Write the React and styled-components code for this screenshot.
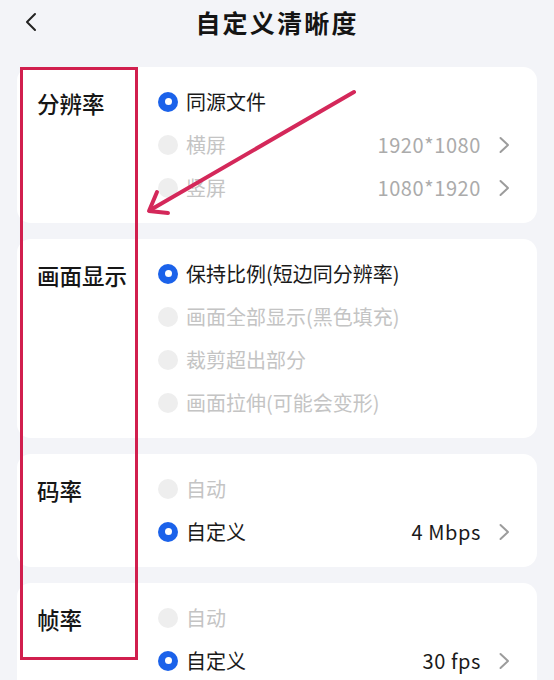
import React from "react";
import styled, { createGlobalStyle } from "styled-components";

const GlobalStyle = createGlobalStyle`
  html, body { margin: 0; padding: 0; background: #f3f4f8; }
  body { font-family: "Noto Sans CJK SC", "Noto Sans", sans-serif; -webkit-font-smoothing: antialiased; }
`;

const Page = styled.div`
  position: relative;
  width: 554px;
  min-height: 680px;
  background: #f3f4f8;
  overflow: hidden;
`;

const Header = styled.div`
  display: grid;
  grid-template-columns: 60px 1fr 60px;
  align-items: center;
  height: 44px;
`;

const BackButton = styled.button`
  display: flex;
  align-items: center;
  justify-content: flex-start;
  padding: 0 0 0 24px;
  border: 0;
  background: none;
  height: 44px;
`;

const Title = styled.h1`
  margin: 0;
  text-align: center;
  font-size: 25px;
  font-weight: 700;
  letter-spacing: 2.2px;
  color: #141414;
`;

const List = styled.div`
  display: flex;
  flex-direction: column;
  gap: 16px;
  padding: 23px 17px 0;
`;

const Card = styled.section`
  display: flex;
  background: #ffffff;
  border-radius: 14px;
  padding: 13px 0 14px 20px;
`;

const Label = styled.div`
  flex: 0 0 121px;
  height: 43px;
  display: flex;
  align-items: center;
  font-size: 22.5px;
  font-weight: 500;
  color: #161616;
  padding-top: 3px;
  box-sizing: border-box;
`;

const Options = styled.div`
  flex: 1;
  display: flex;
  flex-direction: column;
`;

const Row = styled.div`
  display: flex;
  align-items: center;
  height: 43px;
  padding-right: 27px;
`;

const Radio = styled.span`
  flex: 0 0 20px;
  width: 20px;
  height: 20px;
  border-radius: 50%;
  box-sizing: border-box;
  background: ${(p) => (p.$checked ? "#1b62ea" : "#eeeeee")};
  display: flex;
  align-items: center;
  justify-content: center;
  &::after {
    content: "";
    display: ${(p) => (p.$checked ? "block" : "none")};
    width: 7px;
    height: 7px;
    border-radius: 50%;
    background: #ffffff;
  }
`;

const OptionText = styled.span`
  margin-left: 8px;
  font-size: 20px;
  color: ${(p) => (p.$disabled ? "#c4c4c4" : "#1a1a1a")};
  white-space: nowrap;
`;

const Value = styled.span`
  margin-left: auto;
  font-size: 20px;
  letter-spacing: 0.6px;
  color: ${(p) => (p.$disabled ? "#ababab" : "#1a1a1a")};
`;

const ChevronWrap = styled.span`
  display: flex;
  margin-left: 17px;
`;

const Overlay = styled.div`
  position: absolute;
  inset: 0;
  pointer-events: none;
`;

const HighlightBox = styled.div`
  position: absolute;
  left: 20px;
  top: 67px;
  width: 118px;
  height: 593px;
  box-sizing: border-box;
  border: 3px solid #d11f4e;
`;

const ArrowSvg = styled.svg`
  position: absolute;
  left: 0;
  top: 0;
`;

const Chevron = () => (
  <ChevronWrap>
    <svg width="12" height="18" viewBox="0 0 12 18" fill="none">
      <path d="M2.5 2l7.5 7l-7.5 7" stroke="#9c9c9c" strokeWidth="2" strokeLinecap="round" strokeLinejoin="round" />
    </svg>
  </ChevronWrap>
);

const sections = [
  {
    label: "分辨率",
    options: [
      { text: "同源文件", checked: true },
      { text: "横屏", value: "1920*1080", disabled: true },
      { text: "竖屏", value: "1080*1920", disabled: true },
    ],
  },
  {
    label: "画面显示",
    options: [
      { text: "保持比例(短边同分辨率)", checked: true },
      { text: "画面全部显示(黑色填充)", disabled: true },
      { text: "裁剪超出部分", disabled: true },
      { text: "画面拉伸(可能会变形)", disabled: true },
    ],
  },
  {
    label: "码率",
    options: [
      { text: "自动", disabled: true },
      { text: "自定义", checked: true, value: "4 Mbps" },
    ],
  },
  {
    label: "帧率",
    options: [
      { text: "自动", disabled: true },
      { text: "自定义", checked: true, value: "30 fps" },
    ],
  },
];

export default function App() {
  return (
    <>
      <GlobalStyle />
      <Page>
        <Header>
          <BackButton aria-label="返回">
            <svg width="14" height="20" viewBox="0 0 14 20" fill="none">
              <path d="M11 2L3 10l8 8" stroke="#222" strokeWidth="2" strokeLinecap="round" strokeLinejoin="round" />
            </svg>
          </BackButton>
          <Title>自定义清晰度</Title>
          <span />
        </Header>
        <List>
          {sections.map((s) => (
            <Card key={s.label}>
              <Label>{s.label}</Label>
              <Options>
                {s.options.map((o) => (
                  <Row key={o.text}>
                    <Radio $checked={o.checked} />
                    <OptionText $disabled={o.disabled}>{o.text}</OptionText>
                    {o.value && (
                      <>
                        <Value $disabled={o.disabled}>{o.value}</Value>
                        <Chevron />
                      </>
                    )}
                  </Row>
                ))}
              </Options>
            </Card>
          ))}
        </List>
        <Overlay>
          <HighlightBox />
          <ArrowSvg width="554" height="680" viewBox="0 0 554 680">
            <g stroke="#d4285a" strokeWidth="4" strokeLinecap="round" strokeLinejoin="round" fill="none">
              <path d="M354 92L152 209" />
              <path d="M157 192L149 211L168 213" />
            </g>
          </ArrowSvg>
        </Overlay>
      </Page>
    </>
  );
}
